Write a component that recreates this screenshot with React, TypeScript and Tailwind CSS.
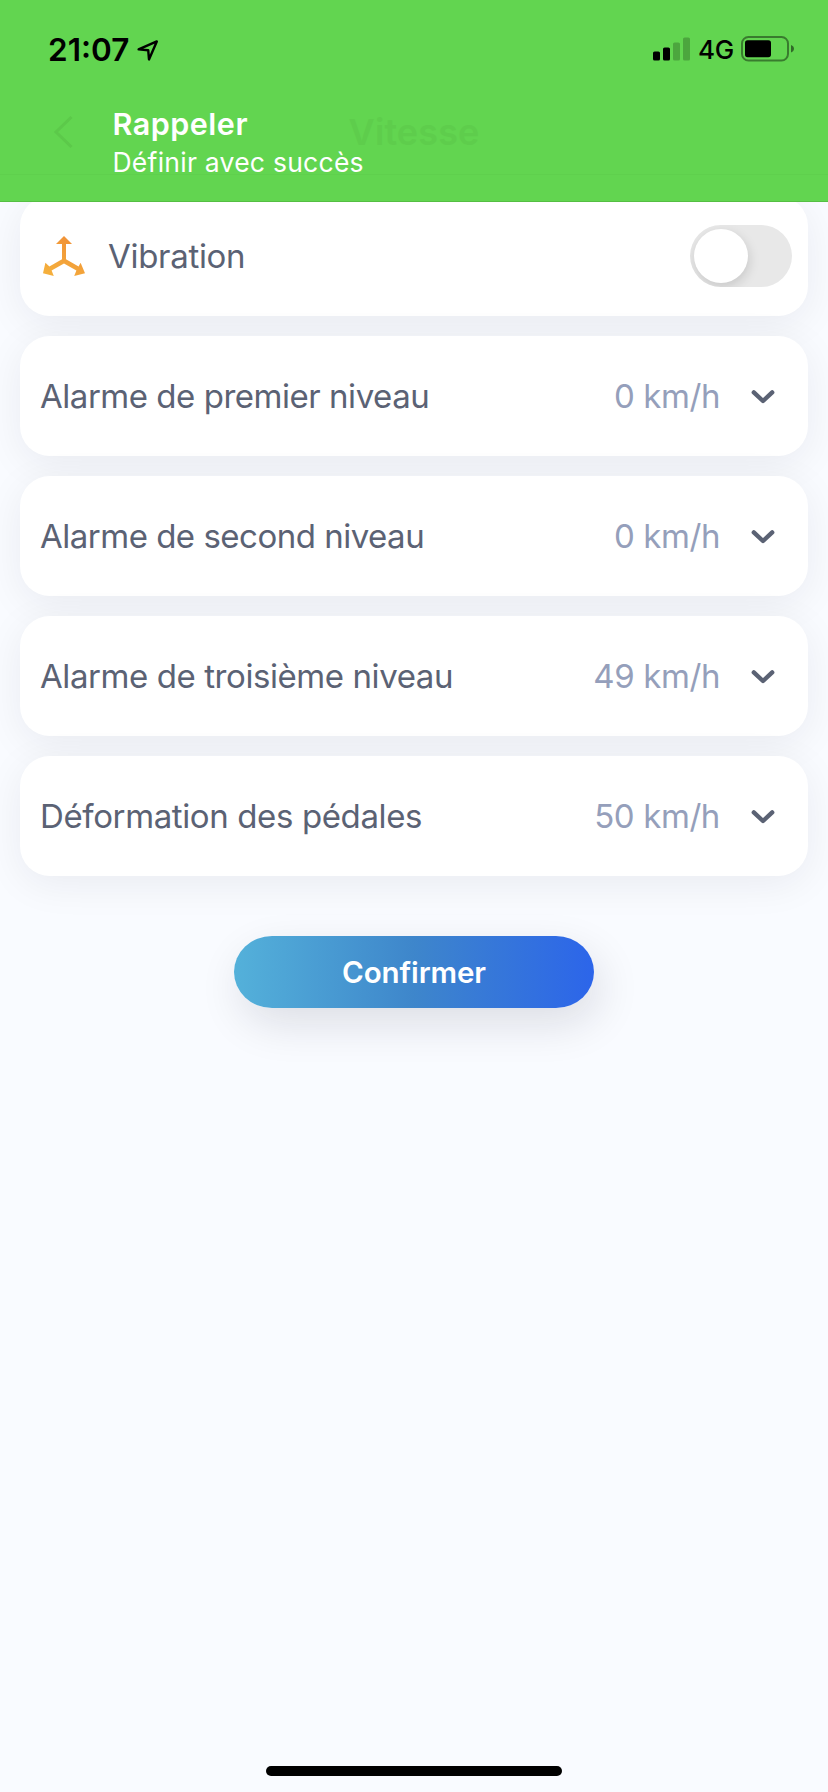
import React from "react";

const alarms = [
  { label: "Alarme de premier niveau", value: "0 km/h", tracking: "tracking-[-0.47px]" },
  { label: "Alarme de second niveau", value: "0 km/h", tracking: "tracking-[-0.5px]" },
  { label: "Alarme de troisième niveau", value: "49 km/h", tracking: "tracking-[-0.42px]" },
  { label: "Déformation des pédales", value: "50 km/h", tracking: "tracking-[-0.38px]" },
];

function StatusBar() {
  return (
    <div className="flex h-[98px] items-center justify-between pl-[48px] pr-[34px] text-black">
      <div className="flex items-center">
        <span className="mt-[2px] w-[88px] text-[31.5px] font-semibold leading-[40px]">21:07</span>
        <svg className="mt-[1px] size-6" viewBox="0 0 24 24" fill="none" stroke="currentColor" strokeWidth="2.4" strokeLinejoin="round">
          <path d="M2.6 11.4 L20.8 3.4 L13 21.4 L12.2 12.2 Z" />
        </svg>
      </div>
      <div className="flex items-center">
        <svg className="h-[24px] w-[37px]" viewBox="0 0 37 24" fill="currentColor">
          <rect x="0" y="14.5" width="7" height="9" rx="1.6" />
          <rect x="10" y="10.5" width="7" height="13" rx="1.6" />
          <rect x="20" y="5.5" width="7" height="18" rx="1.6" opacity="0.22" />
          <rect x="30" y="0.5" width="7" height="23" rx="1.6" opacity="0.22" />
        </svg>
        <span className="ml-[8px] mt-[2px] w-[43px] whitespace-nowrap text-[26px] font-medium leading-[32px] tracking-[-0.2px]">4G</span>
        <svg className="h-[26px] w-[53px]" viewBox="0 0 53 26">
          <rect x="1" y="1" width="46" height="23.5" rx="6.5" fill="none" stroke="#000" strokeOpacity="0.42" strokeWidth="2" />
          <rect x="4" y="4.2" width="26" height="17" rx="2.6" fill="#000" />
          <path d="M50 9 C54 10.5 54 15 50 16.5 Z" fill="#000" fillOpacity="0.5" />
        </svg>
      </div>
    </div>
  );
}

function Notice() {
  return (
    <header className="relative z-10 h-[202px] border-b border-[#55bf43] bg-[#62d550]">
      <StatusBar />
      <div className="relative flex">
        <div className="ml-[112.5px] pt-[8px] text-white">
          <p className="text-[30.5px] font-semibold leading-[36px] tracking-[0.5px]">Rappeler</p>
          <p className="pt-[1px] text-[26.5px] leading-[38px] tracking-[0.25px]">Définir avec succès</p>
        </div>
        <div className="pointer-events-none absolute inset-x-0 top-0 flex h-[77px] items-center justify-center border-b border-[#5fd04d]">
          <svg className="absolute left-[53px] top-[17px] h-[34px] w-[20px]" viewBox="0 0 20 34" fill="none" stroke="#5cc94a" strokeWidth="3">
            <path d="M18.5 2 L3 17 L18.5 32" />
          </svg>
          <span className="mt-[-8px] text-[36px] font-semibold leading-[44px] tracking-[0.1px] text-[#5ecd4c]">Vitesse</span>
        </div>
      </div>
    </header>
  );
}

function Card({ children }: { children: React.ReactNode }) {
  return (
    <section className="flex h-[120px] items-center rounded-[30px] bg-white px-[20px] shadow-[0_8px_40px_rgba(20,20,50,0.065)]">
      {children}
    </section>
  );
}

function AxesIcon() {
  return (
    <svg className="h-[42px] w-[44px]" viewBox="0 0 44 42">
      <defs>
        <linearGradient id="axes" x1="0.8" y1="0" x2="0.2" y2="1">
          <stop offset="0" stopColor="#f08f37" />
          <stop offset="1" stopColor="#f5b03c" />
        </linearGradient>
      </defs>
      <path
        fill="url(#axes)"
        d="M22 1 L30 9 H24 V24.3 L36.6 31.6 L38.6 27.8 L43 38.2 L32.2 41 L34.4 35.4 L22 28.4 L9.6 35.4 L11.8 41 L1 38.2 L3.4 27.8 L7.4 31.6 L20 24.3 V9 H14 Z"
      />
    </svg>
  );
}

export default function App() {
  return (
    <div className="flex h-[1792px] w-[828px] flex-col overflow-hidden bg-[#f9fbff] font-['Inter','Liberation_Sans',sans-serif]">
      <Notice />
      <main className="mt-[-6px] flex flex-1 flex-col px-[20px]">
        <div className="flex flex-col gap-[20px]">
          <Card>
            <div className="ml-[2px]">
              <AxesIcon />
            </div>
            <span className="ml-[22px] flex-1 text-[33px] leading-[40px] tracking-[-0.3px] text-[#5b6274]">Vibration</span>
            <button className="mr-[-4px] h-[62px] w-[102px] overflow-hidden rounded-full bg-[#e8e8e8] p-[4px]" aria-label="Vibration">
              <span className="block size-[54px] rounded-full bg-white shadow-[1px_4px_12px_rgba(0,0,0,0.14)]" />
            </button>
          </Card>
          {alarms.map((a) => (
            <Card key={a.label}>
              <span className={`flex-1 whitespace-nowrap text-[33px] leading-[40px] text-[#5b6274] ${a.tracking}`}>{a.label}</span>
              <span className="whitespace-nowrap text-[33px] leading-[40px] tracking-[-0.4px] text-[#959fbb]">{a.value}</span>
              <svg className="ml-[31px] mr-[13px] mt-[2px] h-[14px] w-[24px]" viewBox="0 0 24 14" fill="none" stroke="#5b6274" strokeWidth="4.4" strokeLinecap="round" strokeLinejoin="round">
                <path d="M2.8 2.4 L12 11 L21.2 2.4" />
              </svg>
            </Card>
          ))}
        </div>
        <button className="mt-[60px] h-[72px] w-[360px] self-center rounded-[38px/36px] bg-[linear-gradient(90deg,#54b1da_0%,#3e86cb_50%,#2c65ea_100%)] pt-[1px] text-[29.5px] font-semibold tracking-[-0.1px] text-white shadow-[6px_16px_44px_rgba(20,20,40,0.12)]">
          Confirmer
        </button>
      </main>
      <div className="mb-[16px] h-[10px] w-[296px] self-center rounded-full bg-black" />
    </div>
  );
}
